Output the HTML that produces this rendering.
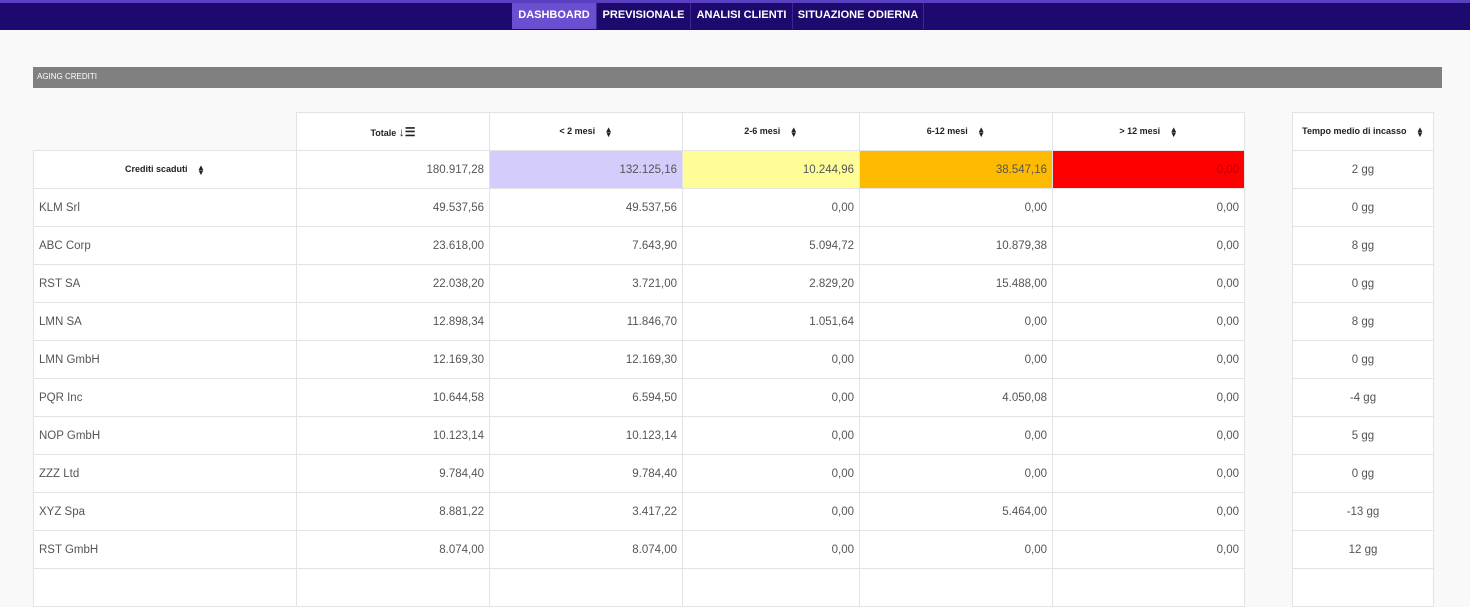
<!DOCTYPE html>
<html><head><style>
body{margin:0;width:1470px;height:571px;overflow:hidden;background:#f9f9f9;font-family:"Liberation Sans",sans-serif;position:relative}
.top{position:absolute;left:0;top:0;width:1470px;height:30px;background:#1e0a6e;border-top:3px solid #5a40c0;box-sizing:border-box}
.tab{position:absolute;top:0;height:26px;line-height:25px;color:#fff;font-weight:bold;font-size:11px;text-align:center;border-right:1px solid #3c2a90;box-sizing:border-box}
.bar{position:absolute;left:33px;top:67px;width:1409px;height:21px;background:#808080;color:#fff;font-size:8px;line-height:20px;padding-left:4px;box-sizing:border-box}
table{position:absolute;border-collapse:collapse;table-layout:fixed}
tr{height:37px}
td{border:1px solid #e3e3e3;height:37px;padding:0 5px;font-size:11.5px;color:#555;background:#fff;text-align:right}
td.l{text-align:left}
td.c{text-align:center}
.h td{font-weight:bold;font-size:9px;color:#222;text-align:center}
td.e{background:transparent;border:none}
.s{display:inline-block;margin-left:7px;font-size:8px;vertical-align:middle;line-height:5px}
</style></head><body>
<div class="top">
<div class="tab" style="left:512px;width:85px;background:#6a4fd0">DASHBOARD</div>
<div class="tab" style="left:597px;width:94px">PREVISIONALE</div>
<div class="tab" style="left:691px;width:102px">ANALISI CLIENTI</div>
<div class="tab" style="left:793px;width:131px">SITUAZIONE ODIERNA</div>
</div>
<div class="bar">AGING CREDITI</div>
<table style="left:33px;top:112px;width:1211px">
<colgroup><col style="width:263px"><col style="width:193px"><col style="width:193px"><col style="width:177px"><col style="width:193px"><col style="width:192px"></colgroup>
<tr class="h"><td class="e"></td><td>Totale <span style="font-size:12px">↓☰</span></td><td>&lt; 2 mesi <span class="s">▲<br>▼</span></td><td>2-6 mesi <span class="s">▲<br>▼</span></td><td>6-12 mesi <span class="s">▲<br>▼</span></td><td>&gt; 12 mesi <span class="s">▲<br>▼</span></td></tr>
<tr><td class="c" style="font-weight:bold;font-size:9px;color:#222">Crediti scaduti <span class="s">▲<br>▼</span></td><td>180.917,28</td><td style="background:#d4ccfa">132.125,16</td><td style="background:#fefd98">10.244,96</td><td style="background:#fdba00">38.547,16</td><td style="background:#fe0000;color:#a00">0,00</td></tr>
<tr><td class="l">KLM Srl</td><td>49.537,56</td><td>49.537,56</td><td>0,00</td><td>0,00</td><td>0,00</td></tr>
<tr><td class="l">ABC Corp</td><td>23.618,00</td><td>7.643,90</td><td>5.094,72</td><td>10.879,38</td><td>0,00</td></tr>
<tr><td class="l">RST SA</td><td>22.038,20</td><td>3.721,00</td><td>2.829,20</td><td>15.488,00</td><td>0,00</td></tr>
<tr><td class="l">LMN SA</td><td>12.898,34</td><td>11.846,70</td><td>1.051,64</td><td>0,00</td><td>0,00</td></tr>
<tr><td class="l">LMN GmbH</td><td>12.169,30</td><td>12.169,30</td><td>0,00</td><td>0,00</td><td>0,00</td></tr>
<tr><td class="l">PQR Inc</td><td>10.644,58</td><td>6.594,50</td><td>0,00</td><td>4.050,08</td><td>0,00</td></tr>
<tr><td class="l">NOP GmbH</td><td>10.123,14</td><td>10.123,14</td><td>0,00</td><td>0,00</td><td>0,00</td></tr>
<tr><td class="l">ZZZ Ltd</td><td>9.784,40</td><td>9.784,40</td><td>0,00</td><td>0,00</td><td>0,00</td></tr>
<tr><td class="l">XYZ Spa</td><td>8.881,22</td><td>3.417,22</td><td>0,00</td><td>5.464,00</td><td>0,00</td></tr>
<tr><td class="l">RST GmbH</td><td>8.074,00</td><td>8.074,00</td><td>0,00</td><td>0,00</td><td>0,00</td></tr>
<tr><td class="l"></td><td></td><td></td><td></td><td></td><td></td></tr>
</table>
<table style="left:1292px;top:112px;width:142px">
<tr class="h"><td>Tempo medio di incasso <span class="s">▲<br>▼</span></td></tr>
<tr><td class="c">2 gg</td></tr><tr><td class="c">0 gg</td></tr><tr><td class="c">8 gg</td></tr><tr><td class="c">0 gg</td></tr><tr><td class="c">8 gg</td></tr><tr><td class="c">0 gg</td></tr><tr><td class="c">-4 gg</td></tr><tr><td class="c">5 gg</td></tr><tr><td class="c">0 gg</td></tr><tr><td class="c">-13 gg</td></tr><tr><td class="c">12 gg</td></tr><tr><td class="c"></td></tr>
</table>
</body></html>
